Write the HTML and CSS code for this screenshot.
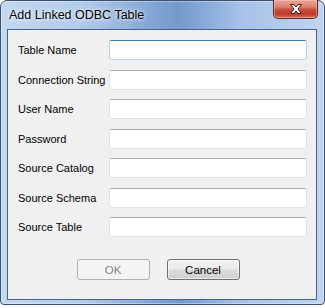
FILE: index.html
```html
<!DOCTYPE html>
<html>
<head>
<meta charset="utf-8">
<link rel="stylesheet" href="styles.css">
</head>
<body>
<div class="window">
  <div class="titlebar">
    <span class="title">Add Linked ODBC Table</span>
    <div class="close">
      <svg width="16" height="12" viewBox="0 0 16 12">
        <path d="M2.5 1.5 H6 L8 4 L10 1.5 H13.5 L10 6 L13.5 10.5 H10 L8 8 L6 10.5 H2.5 L6 6 Z" fill="#ffffff" stroke="#4a1a12" stroke-width="1" stroke-linejoin="round"/>
      </svg>
    </div>
  </div>
  <div class="client">
    <div class="form">
      <label class="lbl">Table Name</label><div class="input focused"></div>
      <label class="lbl">Connection String</label><div class="input"></div>
      <label class="lbl">User Name</label><div class="input"></div>
      <label class="lbl">Password</label><div class="input"></div>
      <label class="lbl">Source Catalog</label><div class="input"></div>
      <label class="lbl">Source Schema</label><div class="input"></div>
      <label class="lbl">Source Table</label><div class="input"></div>
    </div>
    <div class="buttons">
      <div class="btn disabled">OK</div>
      <div class="btn">Cancel</div>
    </div>
  </div>
</div>
</body>
</html>
```
FILE: styles.css
```css
html, body {
  margin: 0;
  padding: 0;
  background: #ffffff;
}
body {
  width: 325px;
  height: 308px;
  overflow: hidden;
  font-family: "Liberation Sans", Arial, sans-serif;
}
.window {
  box-sizing: border-box;
  width: 325px;
  height: 305px;
  border: 1px solid #3b4f6e;
  border-radius: 7px 7px 4px 4px;
  background:
    linear-gradient(to right, #c4d8ef 0%, #b0cbea 25%, #86a8d6 45%, #7499cd 55%, #a8c3e8 75%, #c0d5ef 100%);
  padding: 0 7px 4px 6px;
  display: flex;
  flex-direction: column;
  box-shadow: inset 0 0 0 1px rgba(255,255,255,0.35);
}
.titlebar {
  height: 28px;
  display: flex;
  align-items: flex-start;
  justify-content: space-between;
}
.title {
  margin-top: 7px;
  margin-left: 2px;
  font-size: 12.5px;
  color: #000;
  text-shadow: 0 0 6px rgba(255,255,255,0.9), 0 0 3px rgba(255,255,255,0.8);
}
.close {
  box-sizing: border-box;
  width: 45px;
  height: 19px;
  margin-right: -1px;
  margin-top: -1px;
  border: 1px solid #5b2a24;
  border-top: none;
  border-radius: 0 0 5px 5px;
  background: linear-gradient(to bottom, #e9a898 0%, #d8806f 40%, #c4463a 55%, #c23b2d 80%, #d8705c 100%);
  box-shadow: inset 0 0 0 1px rgba(255,200,190,0.5);
  display: flex;
  align-items: center;
  justify-content: center;
}
.close svg { display: block; }
.client {
  flex: 1;
  border: 1px solid #46638c;
  background: #f0f0f0;
  padding: 10px 9px 0 10px;
  display: flex;
  flex-direction: column;
}
.form {
  display: grid;
  grid-template-columns: 91px 198px;
  row-gap: 9.5px;
  align-items: center;
}
.lbl {
  font-size: 11px;
  color: #000;
  white-space: nowrap;
}
.input {
  box-sizing: border-box;
  height: 20px;
  background: #fff;
  border: 1px solid #e2e3ea;
  border-top-color: #abadb3;
  border-radius: 2px;
}
.input.focused {
  border-color: #b5cfe7;
  border-top-color: #3d7bad;
  border-bottom-color: #b7d9ed;
}
.buttons {
  display: flex;
  justify-content: center;
  gap: 17px;
  margin-top: 22px;
  padding-right: 9px;
}
.btn {
  box-sizing: border-box;
  width: 73px;
  height: 21px;
  border: 1px solid #707070;
  border-radius: 3px;
  background: linear-gradient(to bottom, #f2f2f2 0%, #ebebeb 49%, #dddddd 51%, #cfcfcf 100%);
  box-shadow: inset 0 0 0 1px rgba(255,255,255,0.6);
  font-size: 11.5px;
  color: #000;
  display: flex;
  align-items: center;
  justify-content: center;
}
.btn.disabled {
  border-color: #adb2b5;
  background: #f4f4f4;
  box-shadow: none;
  color: #838383;
}
```
